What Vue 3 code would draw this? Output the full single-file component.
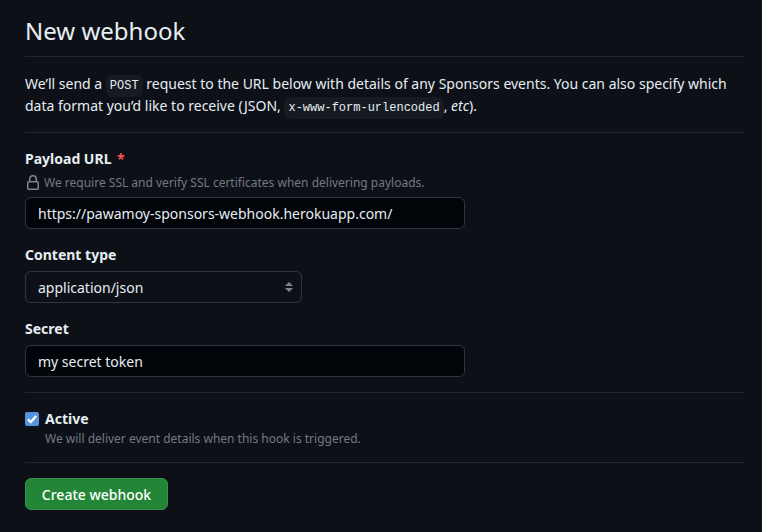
<script setup>
import { ref } from 'vue'

const payloadUrl = ref('https://pawamoy-sponsors-webhook.herokuapp.com/')
const contentType = ref('application/json')
const secret = ref('my secret token')
const active = ref(true)
</script>

<template>
  <main class="page">
    <h2 class="title">New webhook</h2>
    <p class="intro">
      We’ll send a <code>POST</code> request to the URL below with details of any Sponsors events. You can also specify which data format you’d like to receive (JSON, <code>x-www-form-urlencoded</code>, <em>etc</em>).
    </p>
    <form class="form" @submit.prevent>
      <div class="fields">
        <div class="group">
          <label class="label" for="url">Payload URL <span class="required">*</span></label>
          <p class="note ssl">
            <svg class="lock" viewBox="0 0 16 16" width="16" height="16" aria-hidden="true">
              <path fill-rule="evenodd" d="M4 4v2h-.25A1.75 1.75 0 0 0 2 7.75v5.5c0 .966.784 1.75 1.75 1.75h8.5A1.75 1.75 0 0 0 14 13.250v-5.5A1.75 1.75 0 0 0 12.250 6H12V4a4 4 0 1 0-8 0Zm6.500 2V4a2.500 2.500 0 1 0-5 0v2h5ZM12 7.500h.250a.250.250 0 0 1 .250.250v5.500a.250.250 0 0 1-.250.250h-8.500a.250.250 0 0 1-.250-.250v-5.500a.250.250 0 0 1 .250-.250H12Z" />
            </svg>
            We require SSL and verify SSL certificates when delivering payloads.
          </p>
          <input id="url" v-model="payloadUrl" class="control" type="text" spellcheck="false" />
        </div>
        <div class="group">
          <label class="label" for="type">Content type</label>
          <select id="type" v-model="contentType" class="control select">
            <option>application/json</option>
            <option>application/x-www-form-urlencoded</option>
          </select>
          <svg class="arrows" viewBox="0 0 8 10" width="8" height="10" aria-hidden="true">
            <path d="M0 4 4 0l4 4ZM0 6h8l-4 4Z" />
          </svg>
        </div>
        <div class="group">
          <label class="label" for="secret">Secret</label>
          <input id="secret" v-model="secret" class="control" type="text" spellcheck="false" />
        </div>
      </div>
      <div class="activation">
        <label class="active-label">
          <input v-model="active" class="native" type="checkbox" />
          <span class="box" :class="{ checked: active }">
            <svg v-if="active" viewBox="0 0 14 14" width="14" height="14" aria-hidden="true">
              <path d="m2.800 7.200 2.900 2.900 5.500-6.200" />
            </svg>
          </span>
          Active
        </label>
        <p class="note active-note">We will deliver event details when this hook is triggered.</p>
      </div>
      <button class="submit" type="submit">Create webhook</button>
    </form>
  </main>
</template>

<style>
body {
  margin: 0;
  background: #0d1117;
}
</style>

<style scoped>
* {
  box-sizing: border-box;
}
.page {
  min-height: 532px;
  padding: 13px 17px 0 25px;
  background: #0d1117;
  color: #e6edf3;
  font: 14px/21px "Noto Sans", sans-serif;
}
.title {
  height: 44px;
  margin: 0;
  border-bottom: 1px solid #21262d;
  font-size: 24px;
  font-weight: 400;
  line-height: 36px;
}
.intro {
  height: 76px;
  margin: 0;
  padding-top: 16px;
  border-bottom: 1px solid #21262d;
  line-height: 22px;
}
code {
  padding: 4px;
  border-radius: 6px;
  background: #161b22;
  font: 12px "Liberation Mono", monospace;
}
.fields {
  display: flex;
  flex-direction: column;
  gap: 15px;
  height: 260px;
  padding-top: 15px;
  border-bottom: 1px solid #21262d;
}
.group {
  position: relative;
  display: flex;
  flex-direction: column;
  align-items: flex-start;
}
.label {
  height: 27px;
  font-weight: 700;
}
.required {
  margin-left: 2px;
  color: #f85149;
}
.note {
  margin: 0;
  color: #717983;
  font-size: 12px;
  line-height: 18px;
}
.ssl {
  display: flex;
  align-items: center;
  gap: 3px;
  height: 18px;
  margin-top: -1px;
  margin-bottom: 5px;
}
.lock {
  fill: #7d8590;
}
.control {
  width: 440px;
  height: 32px;
  margin: 0;
  padding: 0 12px;
  border: 1px solid #30363d;
  border-radius: 6px;
  outline: none;
  background: #010409;
  color: #e6edf3;
  font: inherit;
}
.select {
  width: 277px;
  background: #0d1117;
  appearance: none;
}
.arrows {
  position: absolute;
  bottom: 11px;
  left: 260px;
  fill: #7d8590;
  pointer-events: none;
}
.activation {
  height: 70px;
  padding-top: 15px;
  border-bottom: 1px solid #21262d;
}
.active-label {
  display: flex;
  align-items: center;
  gap: 6px;
  height: 21px;
  font-weight: 700;
}
.native {
  position: absolute;
  opacity: 0;
}
.box {
  display: flex;
  width: 14px;
  height: 14px;
  border: 1px solid #6e7681;
  border-radius: 2px;
}
.box.checked {
  border: 0;
  background: #5294e2;
}
.box path {
  fill: none;
  stroke: #fff;
  stroke-width: 2.2;
}
.active-note {
  padding-top: 1px;
  padding-left: 20px;
}
.submit {
  display: block;
  width: 143px;
  height: 32px;
  margin-top: 15px;
  padding: 2px 0 0;
  border: 1px solid #36914a;
  border-radius: 6px;
  background: #238636;
  color: #fff;
  font: 500 14px/20px "Noto Sans", sans-serif;
}
</style>
